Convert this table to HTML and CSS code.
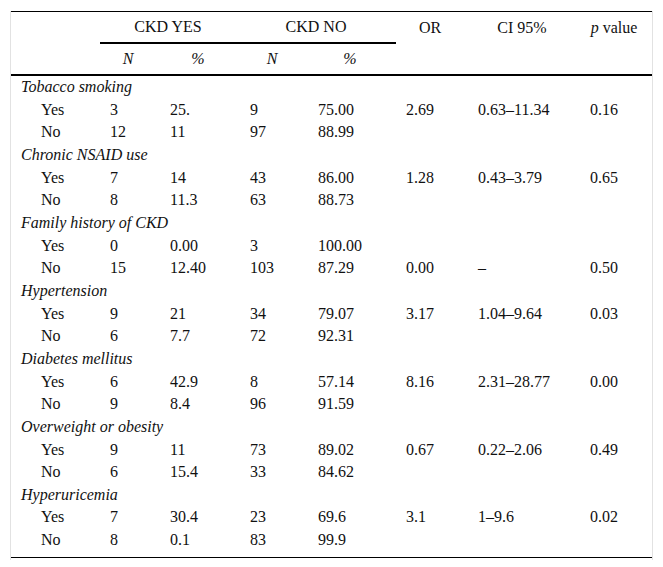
FILE: index.html
```html
<!DOCTYPE html>
<html lang="en">
<head>
<meta charset="utf-8">
<title>CKD risk factors</title>
<link rel="stylesheet" href="styles.css">
</head>
<body>
<div class="frame">
<table class="tbl">
<colgroup>
<col class="c1"><col class="c2"><col class="c3"><col class="c4"><col class="c5"><col class="c6"><col class="c7"><col class="c8">
</colgroup>
<thead>
<tr class="h1">
<th></th>
<th colspan="2" class="grp">CKD YES</th>
<th colspan="2" class="grp">CKD NO</th>
<th>OR</th>
<th>CI 95%</th>
<th><i>p</i> value</th>
</tr>
<tr class="h2">
<th></th>
<th><i>N</i></th>
<th><i>%</i></th>
<th><i>N</i></th>
<th><i>%</i></th>
<th></th>
<th></th>
<th></th>
</tr>
</thead>
<tbody>
<tr class="cat"><td colspan="8">Tobacco smoking</td></tr>
<tr><td class="lab">Yes</td><td>3</td><td>25.</td><td>9</td><td>75.00</td><td>2.69</td><td>0.63–11.34</td><td>0.16</td></tr>
<tr><td class="lab">No</td><td>12</td><td>11</td><td>97</td><td>88.99</td><td></td><td></td><td></td></tr>
<tr class="cat"><td colspan="8">Chronic NSAID use</td></tr>
<tr><td class="lab">Yes</td><td>7</td><td>14</td><td>43</td><td>86.00</td><td>1.28</td><td>0.43–3.79</td><td>0.65</td></tr>
<tr><td class="lab">No</td><td>8</td><td>11.3</td><td>63</td><td>88.73</td><td></td><td></td><td></td></tr>
<tr class="cat"><td colspan="8">Family history of CKD</td></tr>
<tr><td class="lab">Yes</td><td>0</td><td>0.00</td><td>3</td><td>100.00</td><td></td><td></td><td></td></tr>
<tr><td class="lab">No</td><td>15</td><td>12.40</td><td>103</td><td>87.29</td><td>0.00</td><td>–</td><td>0.50</td></tr>
<tr class="cat"><td colspan="8">Hypertension</td></tr>
<tr><td class="lab">Yes</td><td>9</td><td>21</td><td>34</td><td>79.07</td><td>3.17</td><td>1.04–9.64</td><td>0.03</td></tr>
<tr><td class="lab">No</td><td>6</td><td>7.7</td><td>72</td><td>92.31</td><td></td><td></td><td></td></tr>
<tr class="cat"><td colspan="8">Diabetes mellitus</td></tr>
<tr><td class="lab">Yes</td><td>6</td><td>42.9</td><td>8</td><td>57.14</td><td>8.16</td><td>2.31–28.77</td><td>0.00</td></tr>
<tr><td class="lab">No</td><td>9</td><td>8.4</td><td>96</td><td>91.59</td><td></td><td></td><td></td></tr>
<tr class="cat"><td colspan="8">Overweight or obesity</td></tr>
<tr><td class="lab">Yes</td><td>9</td><td>11</td><td>73</td><td>89.02</td><td>0.67</td><td>0.22–2.06</td><td>0.49</td></tr>
<tr><td class="lab">No</td><td>6</td><td>15.4</td><td>33</td><td>84.62</td><td></td><td></td><td></td></tr>
<tr class="cat"><td colspan="8">Hyperuricemia</td></tr>
<tr><td class="lab">Yes</td><td>7</td><td>30.4</td><td>23</td><td>69.6</td><td>3.1</td><td>1–9.6</td><td>0.02</td></tr>
<tr class="last"><td class="lab">No</td><td>8</td><td>0.1</td><td>83</td><td>99.9</td><td></td><td></td><td></td></tr>
</tbody>
</table>
</div>
</body>
</html>
```

FILE: styles.css
```css
html, body {
  margin: 0;
  padding: 0;
  background: #fff;
}

body {
  font-family: "Liberation Serif", "Times New Roman", serif;
  font-size: 16px;
  color: #111;
}

.frame {
  margin: 11px 0 0 10px;
  width: 641px;
  border-left: 1px solid #e2e2e2;
  border-right: 1px solid #e2e2e2;
  padding-bottom: 2px;
}

.tbl {
  width: 641px;
  table-layout: fixed;
  border-collapse: separate;
  border-spacing: 0;
  border-top: 1px solid #000;
  border-bottom: 1px solid #000;
  font-size: 16px;
}

.c1 { width: 89px; }
.c2 { width: 60px; }
.c3 { width: 80px; }
.c4 { width: 68px; }
.c5 { width: 88px; }
.c6 { width: 72px; }
.c7 { width: 112px; }
.c8 { width: 72px; }

th {
  font-weight: normal;
  text-align: center;
  padding: 0 4px 0 0;
  line-height: 30px;
  white-space: nowrap;
}

.h1 .grp {
  border-bottom: 2px solid #000;
}

.h2 th {
  border-bottom: 2px solid #000;
}

td {
  padding: 0 0 0 10px;
  line-height: 22.65px;
  white-space: nowrap;
  text-align: left;
}

.cat td {
  font-style: italic;
}

td.lab {
  padding-left: 30px;
}

.last td {
  padding-bottom: 5px;
}
```
